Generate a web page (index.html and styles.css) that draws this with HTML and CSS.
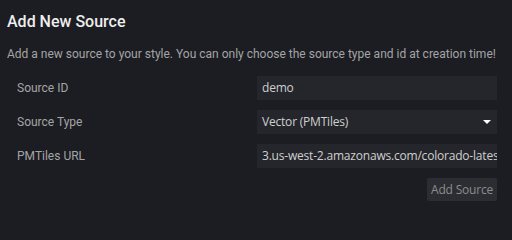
FILE: index.html
```html
<!DOCTYPE html>
<html>
<head>
<meta charset="utf-8">
<link rel="stylesheet" href="styles.css">
</head>
<body>
<div class="panel">
  <h2 class="title">Add New Source</h2>
  <p class="desc">Add a new source to your style. You can only choose the source type and id at creation time!</p>
  <div class="form">
    <div class="row">
      <label class="label">Source ID</label>
      <div class="field">demo</div>
    </div>
    <div class="row">
      <label class="label">Source Type</label>
      <div class="field select">Vector (PMTiles)<span class="caret"></span></div>
    </div>
    <div class="row">
      <label class="label">PMTiles URL</label>
      <div class="field url"><span class="scroll">3.us-west-2.amazonaws.com/colorado-latest.pmtiles</span></div>
    </div>
  </div>
  <div class="actions">
    <button class="btn">Add Source</button>
  </div>
</div>
</body>
</html>
```
FILE: styles.css
```css
html, body {
  margin: 0;
  padding: 0;
  background: #1c1d22;
  width: 512px;
  height: 217px;
  overflow: hidden;
}
.panel {
  padding: 10px 15px 0 7px;
  font-family: Roboto, "Liberation Sans", sans-serif;
}
.title {
  margin: 0;
  font-size: 16px;
  font-weight: 500;
  color: #eeeeee;
  line-height: 24px;
}
.desc {
  margin: 13px 0 0 0;
  font-size: 12px;
  line-height: 14px;
  color: #a4a4a6;
  white-space: nowrap;
}
.form {
  margin-top: 15px;
  display: flex;
  flex-direction: column;
  gap: 10px;
}
.row {
  display: grid;
  grid-template-columns: 1fr 240px;
  align-items: center;
}
.label {
  padding-left: 10px;
  font-size: 12px;
  color: #a4a4a6;
}
.field {
  height: 24px;
  box-sizing: border-box;
  background: #25262b;
  color: #cfcfcf;
  font-family: "Open Sans", "DejaVu Sans", sans-serif;
  font-size: 12px;
  letter-spacing: -0.2px;
  line-height: 24px;
  padding: 0 5px;
  white-space: nowrap;
  overflow: hidden;
  position: relative;
}
.caret {
  position: absolute;
  right: 6px;
  top: 10px;
  width: 0;
  height: 0;
  border-left: 4px solid transparent;
  border-right: 4px solid transparent;
  border-top: 4px solid #ffffff;
}
.url .scroll {
  display: inline-block;
}
.actions {
  display: flex;
  justify-content: flex-end;
  margin-top: 10px;
}
.btn {
  height: 23px;
  padding: 0 4px;
  border: none;
  background: #2c2d32;
  color: #8c8c8e;
  font-family: "Open Sans", "DejaVu Sans", sans-serif;
  font-size: 12px;
  letter-spacing: -0.2px;
  border-radius: 2px;
}
```
